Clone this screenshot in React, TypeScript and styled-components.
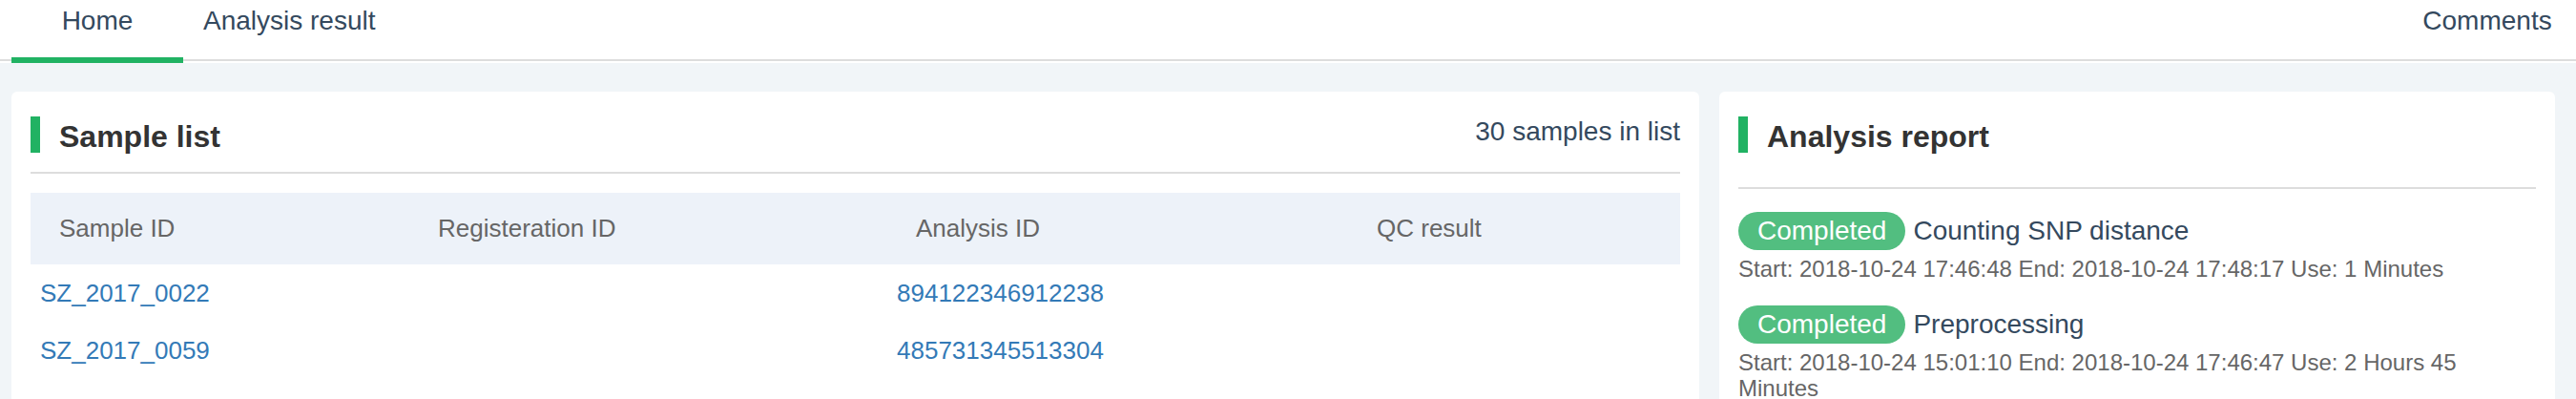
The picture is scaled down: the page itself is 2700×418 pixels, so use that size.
import React from 'react';
import styled, { createGlobalStyle } from 'styled-components';

const GlobalStyle = createGlobalStyle`
  body {
    margin: 0;
    font-family: 'Liberation Sans', Arial, sans-serif;
    background: #f1f5f8;
  }
`;

const TabBar = styled.nav`
  background: #fff;
  padding-bottom: 2px;
`;

const TabList = styled.div`
  display: flex;
  padding: 0 3px 0 12px;
  border-bottom: 2px solid #ddd;
`;

const Tab = styled.div<{ $active?: boolean; $push?: boolean }>`
  position: relative;
  box-sizing: border-box;
  min-width: 180px;
  height: 62px;
  padding: 0 21px;
  margin-left: ${(p) => (p.$push ? 'auto' : '0')};
  font-size: 28px;
  line-height: 43px;
  color: #34495e;
  text-align: center;
  cursor: pointer;

  &::after {
    content: '';
    display: ${(p) => (p.$active ? 'block' : 'none')};
    position: absolute;
    left: 0;
    right: 0;
    bottom: -4px;
    height: 6px;
    background: #21b263;
  }
`;

const Content = styled.main`
  display: grid;
  grid-template-columns: 1769px 876px;
  column-gap: 21px;
  align-items: start;
  padding: 30px 22px 0 12px;
`;

const Card = styled.section`
  background: #fff;
  border-radius: 6px;
  padding: 26px 20px 20px;
`;

const CardHead = styled.header<{ $space: number }>`
  display: flex;
  align-items: flex-start;
  margin-bottom: ${(p) => p.$space}px;
`;

const TitleBar = styled.span`
  flex-shrink: 0;
  width: 10px;
  height: 38px;
  background: #21b263;
`;

const Title = styled.h2`
  margin: 2px 0 0 20px;
  font-size: 32px;
  line-height: 38px;
  font-weight: bold;
  color: #333;
`;

const Count = styled.span`
  margin-left: auto;
  font-size: 28px;
  line-height: 32px;
  color: #34495e;
`;

const Divider = styled.div`
  height: 2px;
  background: #ddd;
`;

const Table = styled.div`
  margin-top: 20px;
`;

const columns = '397px 501px 483px 1fr';

const HeadRow = styled.div`
  display: grid;
  grid-template-columns: ${columns};
  align-items: center;
  height: 75px;
  background: #edf2f9;
`;

const HeadCell = styled.div`
  padding-left: 30px;
  font-size: 26px;
  color: #666;
`;

const Row = styled.div`
  display: grid;
  grid-template-columns: ${columns};
  align-items: center;
  height: 60px;
`;

const Cell = styled.div`
  padding-left: 10px;
  font-size: 26px;
`;

const Link = styled.a`
  color: #337ab7;
  text-decoration: none;
`;

const Steps = styled.div`
  display: flex;
  flex-direction: column;
  gap: 25px;
  margin-top: 24px;
`;

const StepHead = styled.div`
  display: flex;
  align-items: center;
  height: 40px;
`;

const Badge = styled.span`
  height: 40px;
  padding: 0 20px;
  border-radius: 20px;
  background: #52be80;
  color: #fff;
  font-size: 28px;
  line-height: 40px;
`;

const StepName = styled.span`
  margin-left: 8px;
  font-size: 28px;
  line-height: 40px;
  color: #34495e;
`;

const StepTime = styled.div`
  margin-top: 6px;
  font-size: 24px;
  line-height: 27px;
  color: #666;
`;

const samples = [
  { id: 'SZ_2017_0022', reg: '', analysis: '894122346912238', qc: '' },
  { id: 'SZ_2017_0059', reg: '', analysis: '485731345513304', qc: '' },
  { id: 'SZ_2017_0061', reg: '', analysis: '202903461823492', qc: '' },
  { id: 'SZ_2017_0063', reg: '', analysis: '310582947720163', qc: '' },
];

const steps = [
  {
    name: 'Counting SNP distance',
    time: 'Start: 2018-10-24 17:46:48 End: 2018-10-24 17:48:17 Use: 1 Minutes',
  },
  {
    name: 'Preprocessing',
    time: 'Start: 2018-10-24 15:01:10 End: 2018-10-24 17:46:47 Use: 2 Hours 45 Minutes',
  },
];

const App = () => {
  return (
    <>
      <GlobalStyle />
      <TabBar>
        <TabList>
          <Tab $active>Home</Tab>
          <Tab>Analysis result</Tab>
          <Tab $push>Comments</Tab>
        </TabList>
      </TabBar>
      <Content>
        <Card>
          <CardHead $space={18}>
            <TitleBar />
            <Title>Sample list</Title>
            <Count>30 samples in list</Count>
          </CardHead>
          <Divider />
          <Table>
            <HeadRow>
              <HeadCell>Sample ID</HeadCell>
              <HeadCell>Registeration ID</HeadCell>
              <HeadCell>Analysis ID</HeadCell>
              <HeadCell>QC result</HeadCell>
            </HeadRow>
            {samples.map((s) => (
              <Row key={s.id}>
                <Cell>
                  <Link href="#">{s.id}</Link>
                </Cell>
                <Cell>{s.reg}</Cell>
                <Cell>
                  <Link href="#">{s.analysis}</Link>
                </Cell>
                <Cell>{s.qc}</Cell>
              </Row>
            ))}
          </Table>
        </Card>
        <Card>
          <CardHead $space={34}>
            <TitleBar />
            <Title>Analysis report</Title>
          </CardHead>
          <Divider />
          <Steps>
            {steps.map((step) => (
              <div key={step.name}>
                <StepHead>
                  <Badge>Completed</Badge>
                  <StepName>{step.name}</StepName>
                </StepHead>
                <StepTime>{step.time}</StepTime>
              </div>
            ))}
          </Steps>
        </Card>
      </Content>
    </>
  );
};

export default App;
